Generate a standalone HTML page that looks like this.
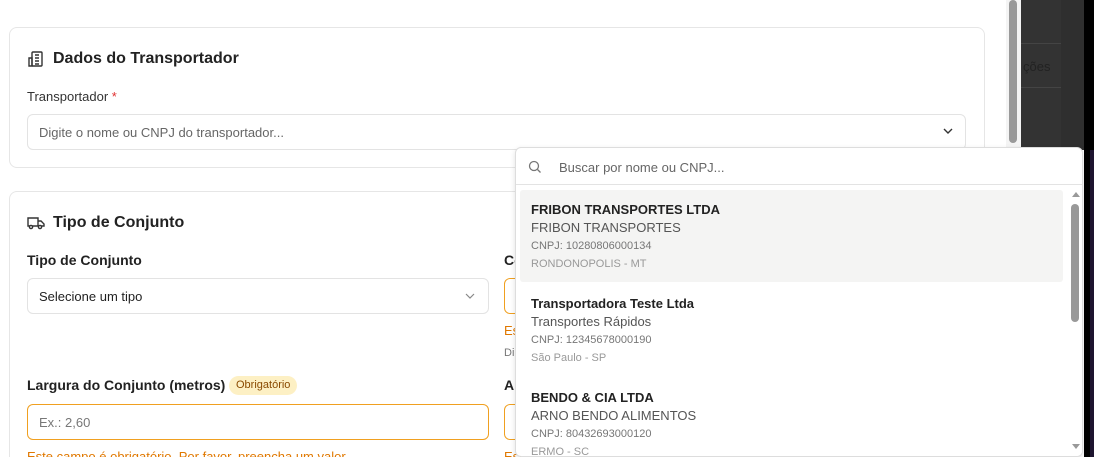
<!DOCTYPE html>
<html style="height:457px;overflow:hidden"><head><meta charset="utf-8"><style>
*{box-sizing:border-box;margin:0;padding:0}
body{width:1094px;height:457px;overflow:hidden;background:#fff;font-family:"Liberation Sans",sans-serif;position:relative;color:#1f2328}
.abs{position:absolute}
.card{position:absolute;border:1px solid #e6e6e6;border-radius:8px;background:#fff}
.h{position:absolute;font-size:16px;font-weight:600;color:#222;display:flex;align-items:center;gap:8px}
.lbl{position:absolute;font-size:13px;color:#333}
.blbl{position:absolute;font-size:14px;font-weight:700;color:#222}
.inp{position:absolute;border:1px solid #e3e3e3;border-radius:6px;font-size:13px;color:#666;padding-left:11px;display:flex;align-items:center;background:#fff}
.or{border-color:#f0a020}
.err{position:absolute;font-size:13px;color:#e07800;height:8px;overflow:hidden;line-height:15px}
.item{position:absolute;left:4px;width:543px;padding:12px 11px}
.item .a{font-size:13px;font-weight:700;color:#222;margin-bottom:3px}
.item .b{font-size:13px;color:#555;margin-bottom:5px}
.item .c{font-size:11px;color:#777;margin-bottom:6px}
.item .d{font-size:11px;color:#999}
</style></head><body>
<div class="card" style="left:9px;top:27px;width:976px;height:141px"></div>
<div class="h" style="left:27px;top:50px"><svg width="18" height="18" viewBox="0 0 18 18" fill="none" stroke="#333" stroke-width="1.4"><rect x="5" y="2" width="10" height="14" rx="1"/><path d="M2 8h3v8H2zM8 5h4M8 8h4M8 11h4M8 14h4"/></svg>Dados do Transportador</div>
<div class="lbl" style="left:27px;top:89px">Transportador <span style="color:#e03030">*</span></div>
<div class="inp" style="left:27px;top:114px;width:939px;height:36px">Digite o nome ou CNPJ do transportador...</div>
<svg class="abs" style="left:942px;top:127px" width="12" height="8" viewBox="0 0 12 8"><path d="M2 2l4 4 4-4" fill="none" stroke="#333" stroke-width="1.4"/></svg>

<div class="card" style="left:9px;top:191px;width:990px;height:266px;border-bottom:none;border-radius:8px 8px 0 0"></div>
<div class="h" style="left:27px;top:214px"><svg width="18" height="16" viewBox="0 0 18 16" fill="none" stroke="#333" stroke-width="1.4"><path d="M1 3h10v8H1zM11 6h3l3 3v2h-6"/><circle cx="4" cy="12" r="1.6" fill="#fff"/><circle cx="13" cy="12" r="1.6" fill="#fff"/></svg>Tipo de Conjunto</div>
<div class="blbl" style="left:27px;top:252px">Tipo de Conjunto</div>
<div class="inp" style="left:27px;top:278px;width:462px;height:36px;color:#222">Selecione um tipo</div>
<svg class="abs" style="left:464px;top:292px" width="12" height="8" viewBox="0 0 12 8"><path d="M2 2l4 4 4-4" fill="none" stroke="#888" stroke-width="1.2"/></svg>
<div class="blbl" style="left:504px;top:252px">Co</div>
<div class="inp or" style="left:504px;top:278px;width:30px;height:36px"></div>
<div class="abs" style="left:504px;top:323px;font-size:13px;color:#e07800">Es</div>
<div class="abs" style="left:504px;top:347px;font-size:11px;color:#777">Di</div>
<div class="blbl" style="left:27px;top:377px">Largura do Conjunto (metros)</div>
<div class="abs" style="left:229px;top:376px;height:19px;padding:0 7px;border-radius:10px;background:#fdf0c4;color:#8a4a00;font-size:11px;line-height:19px">Obrigatório</div>
<div class="blbl" style="left:504px;top:377px">Al</div>
<div class="inp or" style="left:27px;top:404px;width:462px;height:36px;color:#777">Ex.: 2,60</div>
<div class="inp or" style="left:504px;top:404px;width:30px;height:36px"></div>
<div class="err" style="left:27px;top:449px">Este campo é obrigatório. Por favor, preencha um valor.</div>
<div class="err" style="left:504px;top:449px">Este campo é obrigatório. Por favor, preencha um valor.</div>

<div class="abs" style="left:1006px;top:0;width:15px;height:150px;background:#f4f4f4"></div>
<div class="abs" style="left:1009px;top:0;width:8px;height:143px;background:#999;border-radius:4px"></div>
<div class="abs" style="left:1021px;top:0;width:63px;height:150px;background:#333"></div>
<div class="abs" style="left:1061px;top:0;width:23px;height:150px;background:#2f2f2f"></div>
<div class="abs" style="left:1021px;top:43px;width:40px;height:1px;background:#444"></div>
<div class="abs" style="left:1021px;top:87px;width:40px;height:1px;background:#444"></div>
<div class="abs" style="left:1023px;top:59px;font-size:13px;color:#222">ções</div>
<div class="abs" style="left:1084px;top:0;width:10px;height:457px;background:#000"></div>
<div class="abs" style="left:1090px;top:150px;width:4px;height:307px;background:#1e1530"></div>

<div class="abs" style="left:515px;top:147px;width:568px;height:310px;background:#fff;border:1px solid #ddd;border-radius:6px;box-shadow:0 2px 6px rgba(0,0,0,.12);overflow:hidden">
 <svg class="abs" style="left:12px;top:12px" width="14" height="14" viewBox="0 0 14 14" fill="none" stroke="#777" stroke-width="1.3"><circle cx="6" cy="6" r="4.5"/><path d="M9.5 9.5l3 3"/></svg>
 <div class="abs" style="left:43px;top:12px;font-size:13px;color:#666">Buscar por nome ou CNPJ...</div>
 <div class="abs" style="left:0;top:36px;width:568px;height:1px;background:#e3e3e3"></div>
 <div class="item" style="top:42px;height:92px;background:#f4f4f3;border-radius:3px"><div class="a">FRIBON TRANSPORTES LTDA</div><div class="b">FRIBON TRANSPORTES</div><div class="c">CNPJ: 10280806000134</div><div class="d">RONDONOPOLIS - MT</div></div>
 <div class="item" style="top:136px"><div class="a">Transportadora Teste Ltda</div><div class="b">Transportes Rápidos</div><div class="c">CNPJ: 12345678000190</div><div class="d">São Paulo - SP</div></div>
 <div class="item" style="top:230px;height:78px;overflow:hidden"><div class="a">BENDO &amp; CIA LTDA</div><div class="b">ARNO BENDO ALIMENTOS</div><div class="c">CNPJ: 80432693000120</div><div class="d">ERMO - SC</div></div>
 <div class="abs" style="left:554px;top:37px;width:13px;height:271px;background:#fff"></div>
 <svg class="abs" style="left:555px;top:42px" width="10" height="8"><path d="M1 7l4-5 4 5z" fill="#999"/></svg>
 <div class="abs" style="left:555px;top:56px;width:8px;height:118px;background:#999;border-radius:4px"></div>
 <svg class="abs" style="left:555px;top:295px" width="10" height="8"><path d="M1 1l4 5 4-5z" fill="#999"/></svg>
</div>
</body></html>
